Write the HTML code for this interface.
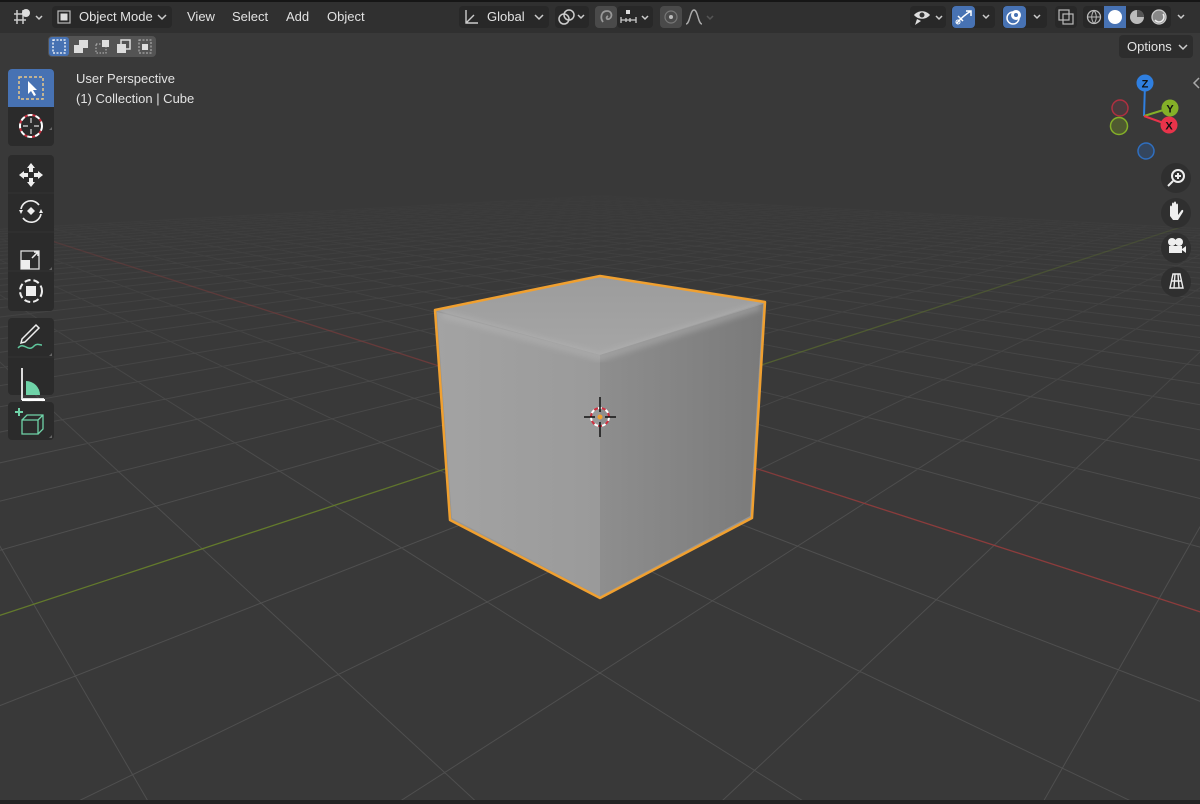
<!DOCTYPE html>
<html><head><meta charset="utf-8">
<style>
*{margin:0;padding:0;box-sizing:border-box}
html{width:1200px;height:804px;overflow:hidden}
body{width:1200px;height:804px;overflow:hidden;background:#393939;font-family:"Liberation Sans","DejaVu Sans",sans-serif;color:#e0e0e0;position:relative}
#hdr{position:absolute;left:0;top:0;width:1200px;height:33px;background:#303030;border-top:2px solid #161616}
.t{position:absolute;font-size:13px;color:#e2e2e2;white-space:nowrap}
.btn{position:absolute;background:#282828;border-radius:4px}
.tb{position:absolute;left:8px;width:46px;background:#2b2b2b;border-radius:4px}
.nav{position:absolute;width:30px;height:30px;border-radius:50%;background:#2f2f2f;left:1161px}
</style></head><body>
<svg id="vp" width="1200" height="804" style="position:absolute;left:0;top:0">
<defs>
<linearGradient id="fade" gradientUnits="userSpaceOnUse" x1="0" y1="170" x2="0" y2="520">
<stop offset="0" stop-color="#000"/><stop offset="0.25" stop-color="#555"/><stop offset="1" stop-color="#fff"/></linearGradient>
<mask id="m"><rect x="0" y="0" width="1200" height="804" fill="url(#fade)"/></mask>
<linearGradient id="lf" x1="0" y1="0" x2="1" y2="0"><stop offset="0" stop-color="#a3a3a3"/><stop offset="1" stop-color="#9a9a9a"/></linearGradient>
<linearGradient id="rf" x1="0" y1="0" x2="1" y2="0"><stop offset="0" stop-color="#8e8e8e"/><stop offset="1" stop-color="#7a7a7a"/></linearGradient>
<linearGradient id="tf" x1="0" y1="0" x2="0" y2="1"><stop offset="0" stop-color="#9c9c9c"/><stop offset="1" stop-color="#a6a6a6"/></linearGradient>
<filter id="bl"><feGaussianBlur stdDeviation="3"/></filter>
</defs>
<g id="grid" mask="url(#m)" stroke="#4f4f4f" stroke-width="1" fill="none"></g>
<g id="axes" mask="url(#m)" fill="none"></g>
<!-- cube -->
<g stroke-linejoin="round">
<path d="M600,276 L435,310 L450,520 L600,598 L752,518 L765,302 Z" fill="#969696"/>
<path d="M600,276 L435,310 L600,355 L765,302 Z" fill="url(#tf)"/>
<path d="M437,312 L600,355 L600,596 L452,518 Z" fill="url(#lf)"/>
<path d="M600,355 L763,304 L750,516 L600,596 Z" fill="url(#rf)"/>
<path d="M442,314 L600,357 L760,306" stroke="#b8b8b8" stroke-width="8" opacity=".45" fill="none" filter="url(#bl)"/>
<path d="M600,360 V590" stroke="#aaa" stroke-width="6" opacity=".3" fill="none" filter="url(#bl)"/>
<path d="M600,276 L435,310 L450,520 L600,598 L752,518 L765,302 Z" fill="none" stroke="#f0a030" stroke-width="2.5"/>
</g>
<!-- 3D cursor -->
<g transform="translate(600,417)">
<circle r="9" fill="none" stroke="#fff" stroke-width="2" stroke-dasharray="4 4"/>
<circle r="9" fill="none" stroke="#d03040" stroke-width="2" stroke-dasharray="4 4" stroke-dashoffset="4"/>
<path d="M0,-20V-5M0,5V20M-16,0H-5M5,0H16" stroke="#111" stroke-width="1.5"/>
<circle r="2.5" fill="#f0a030"/>
</g>
<!-- axis gizmo -->
<g>
<line x1="1144" y1="116" x2="1145" y2="84" stroke="#2f7fe0" stroke-width="2"/>
<line x1="1144" y1="116" x2="1170" y2="108" stroke="#84b028" stroke-width="2"/>
<line x1="1144" y1="116" x2="1169" y2="125" stroke="#e8334a" stroke-width="2"/>
<circle cx="1120" cy="108" r="8" fill="#4a3a3d" stroke="#b03040" stroke-width="1.5"/>
<circle cx="1119" cy="126" r="8.5" fill="#4f5a30" stroke="#84b028" stroke-width="1.5"/>
<circle cx="1146" cy="151" r="8" fill="#34465e" stroke="#2f6fc0" stroke-width="1.5"/>
<circle cx="1145" cy="83" r="8.5" fill="#2f7fe0"/>
<circle cx="1170" cy="108" r="8.5" fill="#84b028"/>
<circle cx="1169" cy="125" r="8.5" fill="#e8334a"/>
<text x="1145" y="87.5" font-size="11" font-weight="bold" fill="#111" text-anchor="middle" font-family="Liberation Sans">Z</text>
<text x="1170" y="112.5" font-size="11" font-weight="bold" fill="#111" text-anchor="middle" font-family="Liberation Sans">Y</text>
<text x="1169" y="129.5" font-size="11" font-weight="bold" fill="#111" text-anchor="middle" font-family="Liberation Sans">X</text>
</g>
</svg>

<div id="hdr"></div>
<svg style="position:absolute;left:12px;top:7px" width="34" height="20"><path d="M2,7H14M2,13H14M5,3V17M11,3V17" stroke="#ccc" stroke-width="1.5"/><circle cx="14" cy="6" r="4" fill="#ddd"/><path d="M24,9l3,3 3,-3" stroke="#ccc" fill="none" stroke-width="1.5"/></svg>
<div class="btn" style="left:52px;top:6px;width:120px;height:22px"></div>
<svg style="position:absolute;left:56px;top:9px" width="16" height="16"><rect x="2" y="2" width="12" height="12" fill="none" stroke="#bbb" stroke-width="1.2"/><rect x="4.5" y="4.5" width="7" height="7" fill="#ddd"/></svg>
<div class="t" style="left:79px;top:9px">Object Mode</div>
<svg style="position:absolute;left:157px;top:13px" width="10" height="8"><path d="M1,2l4,4 4,-4" stroke="#ccc" fill="none" stroke-width="1.5"/></svg>
<div class="t" style="left:187px;top:9px">View</div>
<div class="t" style="left:232px;top:9px">Select</div>
<div class="t" style="left:286px;top:9px">Add</div>
<div class="t" style="left:327px;top:9px">Object</div>
<div class="btn" style="left:459px;top:6px;width:90px;height:22px"></div>
<svg style="position:absolute;left:462px;top:8px" width="18" height="18"><path d="M4,2V15H16M4,15L12,7" stroke="#ccc" fill="none" stroke-width="1.4"/></svg>
<div class="t" style="left:487px;top:9px">Global</div>
<svg style="position:absolute;left:534px;top:13px" width="10" height="8"><path d="M1,2l4,4 4,-4" stroke="#ccc" fill="none" stroke-width="1.5"/></svg>
<div class="btn" style="left:555px;top:6px;width:34px;height:22px"></div>
<svg style="position:absolute;left:557px;top:8px" width="32" height="18"><circle cx="7" cy="11" r="5" fill="none" stroke="#ccc" stroke-width="1.5"/><circle cx="12" cy="7" r="5" fill="none" stroke="#ccc" stroke-width="1.5"/><path d="M21,7l3,3 3,-3" stroke="#ccc" fill="none" stroke-width="1.5"/></svg>
<div class="btn" style="left:595px;top:6px;width:22px;height:22px;background:#4a4a4a"></div>
<svg style="position:absolute;left:598px;top:8px" width="18" height="18"><path d="M5,14C2,10 3,3 9,3C14,3 15,9 11,11C8,12 8,9 10,8" stroke="#999" fill="none" stroke-width="1.8"/></svg>
<div class="btn" style="left:617px;top:6px;width:36px;height:22px"></div>
<svg style="position:absolute;left:619px;top:7px" width="34" height="20"><rect x="7" y="3" width="4" height="4" fill="#ddd"/><path d="M2,10V16M17,10V16M2,13H17M7,11V15M11,11V15" stroke="#ccc" stroke-width="1.3"/><path d="M23,9l3,3 3,-3" stroke="#ccc" fill="none" stroke-width="1.5"/></svg>
<div class="btn" style="left:660px;top:6px;width:22px;height:22px;background:#4a4a4a"></div>
<svg style="position:absolute;left:663px;top:9px" width="16" height="16"><circle cx="8" cy="8" r="6" fill="none" stroke="#777" stroke-width="1.2"/><circle cx="8" cy="8" r="2" fill="#bbb"/></svg>
<svg style="position:absolute;left:684px;top:7px" width="34" height="20"><path d="M2,17C6,17 6,3 10,3C14,3 14,17 18,17" stroke="#aaa" fill="none" stroke-width="1.4"/><path d="M23,9l3,3 3,-3" stroke="#555" fill="none" stroke-width="1.5"/></svg>
<div class="btn" style="left:910px;top:6px;width:36px;height:22px"></div>
<svg style="position:absolute;left:912px;top:7px" width="34" height="20"><path d="M2,8C6,3 14,3 18,8C14,13 6,13 2,8Z" fill="#ddd"/><circle cx="10" cy="8" r="2.5" fill="#333"/><path d="M5,12L3,18L9,14Z" fill="#ddd"/><path d="M24,9l3,3 3,-3" stroke="#ccc" fill="none" stroke-width="1.5"/></svg>
<div class="btn" style="left:951px;top:6px;width:44px;height:22px"></div>
<div class="btn" style="left:952px;top:6px;width:23px;height:22px;background:#4772b3"></div>
<svg style="position:absolute;left:954px;top:8px" width="40" height="18"><path d="M3,15C8,9 12,6 17,3M12,3H17V8M4,8L9,13" stroke="#fff" fill="none" stroke-width="1.5"/><circle cx="4" cy="14" r="2" fill="none" stroke="#fff"/><path d="M29,7l3,3 3,-3" stroke="#ccc" fill="none" stroke-width="1.5"/></svg>
<div class="btn" style="left:1002px;top:6px;width:45px;height:22px"></div>
<div class="btn" style="left:1003px;top:6px;width:23px;height:22px;background:#4772b3"></div>
<svg style="position:absolute;left:1005px;top:8px" width="42" height="18"><circle cx="8" cy="10" r="6" fill="none" stroke="#fff" stroke-width="1.5"/><circle cx="11" cy="7" r="5" fill="#fff"/><circle cx="11" cy="7" r="2" fill="#4772b3"/><path d="M29,7l3,3 3,-3" stroke="#ccc" fill="none" stroke-width="1.5"/></svg>
<div class="btn" style="left:1055px;top:6px;width:22px;height:22px"></div>
<svg style="position:absolute;left:1058px;top:9px" width="16" height="16"><rect x="1" y="1" width="10" height="10" fill="none" stroke="#bbb" stroke-width="1.2"/><rect x="5" y="5" width="10" height="10" fill="none" stroke="#bbb" stroke-width="1.2"/></svg>
<div class="btn" style="left:1083px;top:6px;width:88px;height:22px"></div>
<div class="btn" style="left:1104px;top:6px;width:22px;height:22px;background:#4772b3;border-radius:0"></div>
<svg style="position:absolute;left:1083px;top:6px" width="110" height="22"><circle cx="11" cy="11" r="6.5" fill="none" stroke="#bbb" stroke-width="1.3"/><path d="M4.5,11H17.5M11,4.5C8,8 8,14 11,17.5M11,4.5C14,8 14,14 11,17.5" stroke="#bbb" fill="none"/><circle cx="32" cy="11" r="7" fill="#fff"/><circle cx="54" cy="11" r="7" fill="#bbb"/><path d="M54,4A7,7 0 0 1 61,11H54Z" fill="#555"/><circle cx="76" cy="11" r="7" fill="#888" stroke="#ccc" stroke-width="1.3"/><path d="M72,14A5,5 0 0 0 80,8" stroke="#eee" fill="none" stroke-width="1.5"/><path d="M95,9l3,3 3,-3" stroke="#ccc" fill="none" stroke-width="1.5"/></svg>
<div class="btn" style="left:48px;top:36px;width:108px;height:21px;background:#545454"></div>
<div class="btn" style="left:49px;top:37px;width:20px;height:19px;background:#4772b3;border-radius:3px"></div>
<svg style="position:absolute;left:49px;top:37px" width="108" height="19"><rect x="4" y="3" width="12" height="13" fill="none" stroke="#fff" stroke-width="1.3" stroke-dasharray="2 1.5"/><rect x="25" y="8" width="9" height="8" fill="#ddd"/><rect x="30" y="3" width="9" height="8" fill="#ddd"/><rect x="47" y="7" width="10" height="9" fill="none" stroke="#bbb" stroke-dasharray="1.5 1.5"/><rect x="53" y="3" width="7" height="7" fill="#ddd"/><rect x="68" y="7" width="9" height="9" fill="#ddd"/><rect x="72" y="3" width="9" height="9" fill="none" stroke="#ddd" stroke-width="1.5"/><rect x="90" y="3" width="12" height="13" fill="none" stroke="#bbb" stroke-dasharray="2 1.5"/><rect x="93" y="7" width="6" height="6" fill="#ddd"/></svg>
<div class="btn" style="left:1119px;top:35px;width:74px;height:23px;background:#2d2d2d"></div>
<div class="t" style="left:1127px;top:39px">Options</div>
<svg style="position:absolute;left:1178px;top:43px" width="10" height="8"><path d="M1,2l4,4 4,-4" stroke="#ccc" fill="none" stroke-width="1.5"/></svg>
<svg style="position:absolute;left:1192px;top:76px" width="8" height="14"><path d="M7,2L2,7 7,12" stroke="#aaa" fill="none" stroke-width="1.5"/></svg>
<div class="t" style="left:76px;top:71px">User Perspective</div>
<div class="t" style="left:76px;top:91px">(1) Collection | Cube</div>
<div class="tb" style="top:69px;height:77px"></div>
<div class="tb" style="top:69px;height:38px;background:#4772b3;border-radius:4px 4px 0 0"></div>
<div class="tb" style="top:155px;height:156px"></div>
<div class="tb" style="top:318px;height:77px"></div>
<div class="tb" style="top:402px;height:38px"></div>
<svg style="position:absolute;left:8px;top:69px" width="46" height="372">
<g stroke="#333" stroke-width="1"><line x1="0" y1="124" x2="46" y2="124"/><line x1="0" y1="163" x2="46" y2="163"/><line x1="0" y1="202" x2="46" y2="202"/><line x1="0" y1="288" x2="46" y2="288"/></g>
<rect x="11" y="8" width="24" height="22" fill="none" stroke="#e8c88a" stroke-width="1.5" stroke-dasharray="3 2"/>
<path d="M20,12V25L23,22L26,27L28,26L25,21H29Z" fill="#fff"/>
<circle cx="23" cy="57" r="11" fill="none" stroke="#fff" stroke-width="2" stroke-dasharray="5 3"/>
<circle cx="23" cy="57" r="11" fill="none" stroke="#c83040" stroke-width="2" stroke-dasharray="3 5" stroke-dashoffset="-5"/>
<path d="M23,49V54M23,60V65M15,57H20M26,57H31" stroke="#ddd" stroke-width="1.2"/>
<g fill="#eee"><path d="M23,94l-4,5h8z M23,118l-4,-5h8z M11,106l5,-4v8z M35,106l-5,-4v8z"/><rect x="21" y="99" width="4" height="4"/><rect x="21" y="109" width="4" height="4"/><rect x="16" y="104" width="4" height="4"/><rect x="26" y="104" width="4" height="4"/></g>
<path d="M13,140A10,10 0 0 1 31,136M33,145A10,10 0 0 1 15,149" stroke="#eee" fill="none" stroke-width="1.6"/><path d="M23,138l4,4 -4,4 -4,-4z" fill="#eee"/><path d="M11,141l4,0 -2,4z M35,144l-4,0 2,-4z" fill="#eee"/>
<rect x="13" y="182" width="18" height="18" fill="none" stroke="#ddd" stroke-width="1.3"/><rect x="13" y="191" width="9" height="9" fill="#eee"/><path d="M24,189L30,183M26,183H30V187" stroke="#eee" stroke-width="1.5" fill="none"/>
<circle cx="23" cy="222" r="11" fill="none" stroke="#eee" stroke-width="2" stroke-dasharray="6 3"/><rect x="18" y="217" width="10" height="10" fill="#eee"/>
<path d="M14,270L28,256L31,259L17,273L13,274Z" fill="none" stroke="#eee" stroke-width="1.5"/><path d="M10,279C16,272 20,284 26,277C29,274 32,276 34,276" stroke="#5fc79d" fill="none" stroke-width="1.5"/>
<path d="M14,299V330H36" stroke="#ddd" fill="none" stroke-width="2"/><path d="M18,312A14,14 0 0 1 32,326H18Z" fill="#6fd3a8"/><path d="M14,331H37" stroke="#fff" stroke-width="2"/>
<path d="M11,339V347M7,343H15" stroke="#6fd3a8" stroke-width="2"/><path d="M14,351H30V365H14ZM14,351L19,346H35V360L30,365M30,351L35,346" stroke="#6fd3a8" fill="none" stroke-width="1.3"/>
<g fill="#666"><path d="M44,61l0,-3 -3,3z M44,201l0,-3 -3,3z M44,287l0,-3 -3,3z M44,369l0,-3 -3,3z"/></g>
</svg>
<div class="nav" style="top:163px"></div><div class="nav" style="top:198px"></div><div class="nav" style="top:233px"></div><div class="nav" style="top:267px"></div>
<svg style="position:absolute;left:1161px;top:163px" width="30" height="134">
<circle cx="17" cy="13" r="6" fill="none" stroke="#eee" stroke-width="2"/><path d="M17,10V16M14,13H20M12,18L7,23" stroke="#eee" stroke-width="2"/>
<path d="M9,53V44C9,42 11,42 11,44V48V41C11,39 13,39 13,41V48V40C13,38 15,38 15,40V48V42C15,40 17,40 17,42V52L20,48C21,46 23,47 22,49L17,57H12Z" fill="#eee"/>
<circle cx="11" cy="79" r="4" fill="#eee"/><circle cx="18" cy="79" r="4" fill="#eee"/><rect x="8" y="83" width="13" height="7" fill="#eee"/><path d="M21,86L25,83V90L21,87Z" fill="#eee"/>
<path d="M9,125L12,111H19L22,125Z M14,111L13,125M17,111L18,125M10,118H21" stroke="#eee" fill="none" stroke-width="1.4"/>
</svg>
<div style="position:absolute;left:0;top:800px;width:1200px;height:4px;background:#222"></div>
<script>
(function(){
var sx=-0.0805, sy=0.082;
function P(X,Y){var w=1+sx*X+sy*Y;return [(-230*sx*X+1415*sy*Y+600)/w,(150*sx*X+150*sy*Y+418)/w];}
var g=document.getElementById('grid'),a=document.getElementById('axes'),ns='http://www.w3.org/2000/svg',s='';
var N=30,eps=0.12,F=30;
function seg(fix,isX){
 var lo,hi;
 if(isX){ lo=(eps-1-sx*fix)/sy; hi=F; }
 else { hi=(eps-1-sy*fix)/sx; lo=-F; }
 if(lo>=hi) return null;
 var p1=isX?P(fix,lo):P(lo,fix), p2=isX?P(fix,hi):P(hi,fix);
 return 'M'+p1[0].toFixed(1)+','+p1[1].toFixed(1)+'L'+p2[0].toFixed(1)+','+p2[1].toFixed(1);
}
for(var k=-N;k<=N;k++){ if(k===0) continue; var d=seg(k,true); if(d) s+=d; d=seg(k,false); if(d) s+=d; }
var p=document.createElementNS(ns,'path');p.setAttribute('d',s);g.appendChild(p);
var r=document.createElementNS(ns,'path');r.setAttribute('d',seg(0,false));r.setAttribute('stroke','#8c3c3c');r.setAttribute('stroke-width','1.3');a.appendChild(r);
var q=document.createElementNS(ns,'path');q.setAttribute('d',seg(0,true));q.setAttribute('stroke','#637a2c');q.setAttribute('stroke-width','1.3');a.appendChild(q);
})();
</script>
</body></html>
